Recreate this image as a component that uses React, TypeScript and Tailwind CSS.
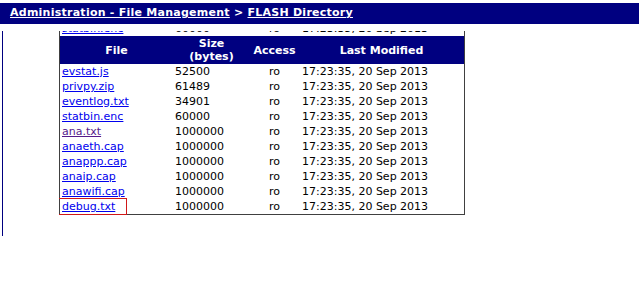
const files = [
  { name: 'evstat.js', size: '52500', visited: false },
  { name: 'privpy.zip', size: '61489', visited: false },
  { name: 'eventlog.txt', size: '34901', visited: false },
  { name: 'statbin.enc', size: '60000', visited: false },
  { name: 'ana.txt', size: '1000000', visited: true },
  { name: 'anaeth.cap', size: '1000000', visited: false },
  { name: 'anappp.cap', size: '1000000', visited: false },
  { name: 'anaip.cap', size: '1000000', visited: false },
  { name: 'anawifi.cap', size: '1000000', visited: false },
  { name: 'debug.txt', size: '1000000', visited: false, focused: true },
]

const stamp = '17:23:35, 20 Sep 2013'

function Row({ name, size, visited, focused }: { name: string; size: string; visited?: boolean; focused?: boolean }) {
  return (
    <tr className="h-[15px]">
      <td className="w-[113px] pl-[2px] p-0 relative">
        <a
          href="#"
          className={`underline ${visited ? 'text-[#551a8b]' : 'text-[#0000ee]'}`}
        >
          {name}
        </a>
        {focused && (
          <span className="absolute left-[-3px] top-[-1px] w-[70px] h-[17px] border border-[#d01818] pointer-events-none" />
        )}
      </td>
      <td className="w-[77px] pl-[2px] p-0">{size}</td>
      <td className="w-[49px] p-0 text-center">ro</td>
      <td className="p-0 pl-[3px]">{stamp}</td>
    </tr>
  )
}

export default function App() {
  return (
    <div className="w-[639px] h-[300px] bg-white text-black text-[11px] font-['DejaVu_Sans',Verdana,sans-serif]">
      <div className="mt-[3px] h-[21px] bg-[#000080] pl-[10px] flex items-center font-bold text-[11px] tracking-[0.25px] text-white">
        <a href="#" className="underline">Administration - File Management</a>
        <span>&nbsp;&gt;&nbsp;</span>
        <a href="#" className="underline">FLASH Directory</a>
      </div>

      <div className="flex">
        <div className="ml-[2px] mt-[7px] w-px h-[205px] bg-[#000080]" />

        <div className="ml-[56px] mt-[7px] w-[406px] h-[185px] overflow-hidden flex flex-col">
          <div className="-mt-[10px] border-x border-b border-[#404040] leading-[15px]">
            {/* tail of the row scrolled above the header */}
            <table className="w-full">
              <tbody>
                <Row name="statbin.enc" size="60000" />
              </tbody>
            </table>
            <table className="w-full">
              <thead>
                <tr className="h-[28px] bg-[#000080] text-white font-bold leading-[13px]">
                  <th className="w-[113px] p-0 text-center">File</th>
                  <th className="w-[77px] p-0 text-center">
                    Size
                    <br />
                    (bytes)
                  </th>
                  <th className="w-[49px] p-0 text-center">Access</th>
                  <th className="p-0 text-center">Last Modified</th>
                </tr>
              </thead>
              <tbody>
                {files.map(f => (
                  <Row key={f.name} {...f} />
                ))}
              </tbody>
            </table>
          </div>
        </div>
      </div>
    </div>
  )
}
